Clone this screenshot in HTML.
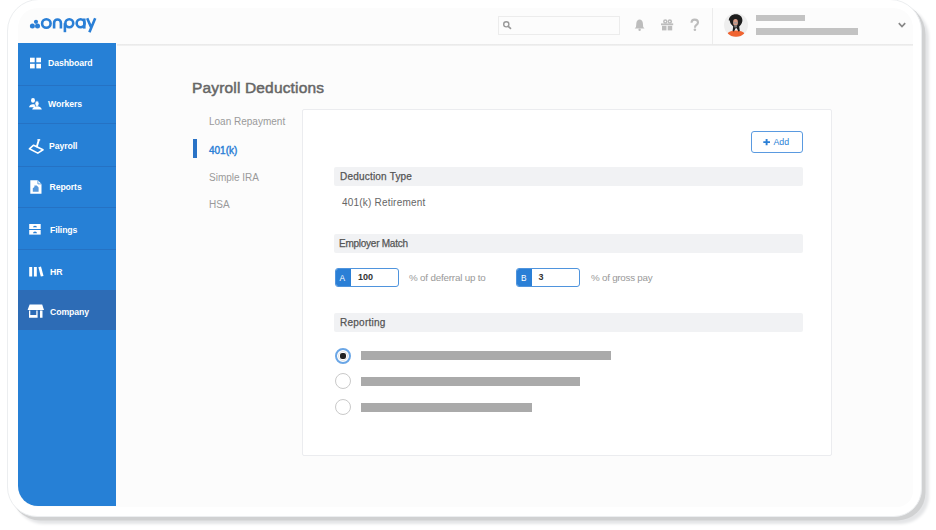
<!DOCTYPE html>
<html><head><meta charset="utf-8">
<style>
*{box-sizing:border-box;margin:0;padding:0}
html,body{width:936px;height:530px;overflow:hidden;background:#fff}
body{position:relative;font-family:"Liberation Sans",sans-serif}
.a{position:absolute}
.frame{left:7px;top:-1px;width:915px;height:517.5px;border-radius:32px 32px 28px 30px;background:#fff;border:1.5px solid #eceef0;box-shadow:3.5px 3.5px 0.5px #d0d1d2,7px 7px 3px #e4e5e7}
.panel{left:18px;top:8px;width:895px;height:498.5px;border-radius:20px 20px 16px 20px;background:#fcfcfc;overflow:hidden}
.hline{left:116.5px;top:43.5px;width:796.5px;height:2.5px;background:linear-gradient(#e8e8e8,#f3f3f3)}
.side{left:18px;top:43.3px;width:98.2px;height:463.2px;background:#2680d6;border-bottom-left-radius:20px}
.div{left:18px;width:98.2px;height:1px;background:#2572c4}
.nav{position:absolute;color:#fff;font-weight:bold;font-size:8.7px;letter-spacing:-0.1px;white-space:nowrap;line-height:1}
.t{position:absolute;white-space:nowrap;line-height:1}
.bar{position:absolute;background:#aaa}
</style></head><body>
<div class="a frame"></div>
<div class="a panel"></div>
<div class="a hline"></div>
<!-- logo -->
<svg class="a" style="left:26px;top:12px" width="76" height="24" viewBox="26 12 76 24">
 <g fill="#2a7fd6">
  <circle cx="36" cy="21.8" r="2.1"/><circle cx="32.4" cy="26.1" r="2.5"/><circle cx="37.5" cy="26.1" r="2.5"/>
 </g>
 <g fill="none" stroke="#2a7fd6" stroke-width="2.6" stroke-linecap="butt">
  <circle cx="46.35" cy="23.5" r="4.25"/>
  <path d="M54.1 28.4V22.9a3.4 3.4 0 0 1 6.8 0V28.4"/>
  <path d="M64.9 32.2V23.2"/><circle cx="69.3" cy="23.25" r="3.95"/>
  <circle cx="80.6" cy="23.25" r="3.95"/><path d="M84.3 18.5V28.6"/>
  <path d="M87.2 18.3L91.2 27.4M95.2 18.3L89.4 32.2"/>
 </g>
</svg>

<!-- sidebar -->
<div class="a side"></div>
<div class="a" style="left:18px;top:290px;width:98.2px;height:40.3px;background:#2d6cb6"></div>
<div class="a div" style="top:85px"></div>
<div class="a div" style="top:123px"></div>
<div class="a div" style="top:166px"></div>
<div class="a div" style="top:207px"></div>
<div class="a div" style="top:249px"></div>

<div class="nav" style="left:48px;top:59px">Dashboard</div>
<div class="nav" style="left:48px;top:100px">Workers</div>
<div class="nav" style="left:49px;top:142px">Payroll</div>
<div class="nav" style="left:49.5px;top:183px">Reports</div>
<div class="nav" style="left:50px;top:226px">Filings</div>
<div class="nav" style="left:50px;top:268px">HR</div>
<div class="nav" style="left:50px;top:308px">Company</div>

<!-- header -->
<div class="a" style="left:498px;top:16px;width:122px;height:19px;border:1px solid #ececec;background:#fcfcfc"></div>
<svg class="a" style="left:500px;top:18px" width="16" height="14" viewBox="500 18 16 14">
 <circle cx="506.3" cy="24.3" r="2.6" fill="none" stroke="#999" stroke-width="1.4"/>
 <path d="M508.2 26.3L510.5 28.4" stroke="#999" stroke-width="1.6" stroke-linecap="round"/>
</svg>
<div class="a" style="left:712px;top:8px;width:1px;height:36px;background:#ececec"></div>
<div class="a" style="left:724px;top:13px;width:24px;height:24px;border-radius:50%;background:#eeeeee"></div>
<div class="bar" style="left:756px;top:15px;width:49px;height:6px;background:#c3c3c3"></div>
<div class="bar" style="left:756px;top:28px;width:102px;height:7px;background:#c3c3c3"></div>
<svg class="a" style="left:896px;top:20px" width="12" height="10" viewBox="896 20 12 10">
 <path d="M898.8 23.2L902 26.6L905.2 23.2" fill="none" stroke="#888" stroke-width="1.7"/>
</svg>

<!-- title -->
<div class="t" style="left:192px;top:80px;font-size:15.5px;letter-spacing:0.16px;color:#666;-webkit-text-stroke:0.5px #666">Payroll Deductions</div>
<div class="t" style="left:209px;top:116.5px;font-size:10px;color:#9a9a9a">Loan Repayment</div>
<div class="a" style="left:193px;top:139px;width:4px;height:19px;background:#2a73c6"></div>
<div class="t" style="left:209px;top:145.5px;font-size:10px;color:#2a7fd6;-webkit-text-stroke:0.4px #2a7fd6">401(k)</div>
<div class="t" style="left:209px;top:172.5px;font-size:10px;color:#9a9a9a">Simple IRA</div>
<div class="t" style="left:209px;top:200px;font-size:10px;color:#9a9a9a">HSA</div>

<!-- card -->
<div class="a" style="left:302px;top:109px;width:530px;height:347px;background:#fff;border:1px solid #ebecef;border-radius:2px"></div>
<div class="a" style="left:751px;top:131px;width:52px;height:22px;border:1px solid #5a9ae0;border-radius:3px;background:#fff"></div>
<div class="t" style="left:773.5px;top:138px;font-size:8.8px;color:#2a7fd6">Add</div>
<div class="a" style="left:333.5px;top:167px;width:469px;height:18.5px;background:#f1f2f4;border-radius:2px"></div>
<div class="t" style="left:340px;top:172px;font-size:10px;letter-spacing:0.2px;color:#555;-webkit-text-stroke:0.25px #555">Deduction Type</div>
<div class="t" style="left:342px;top:198px;font-size:10px;letter-spacing:0.2px;color:#666">401(k) Retirement</div>
<div class="a" style="left:333.5px;top:234.2px;width:469px;height:19px;background:#f1f2f4;border-radius:2px"></div>
<div class="t" style="left:339px;top:239px;font-size:10px;letter-spacing:-0.25px;color:#555;-webkit-text-stroke:0.25px #555">Employer Match</div>
<div class="a" style="left:334.5px;top:268px;width:64px;height:19px;border:1px solid #4f94dd;border-radius:3px;background:#fff;overflow:hidden"><div class="a" style="left:0;top:0;width:15px;height:17px;background:#2a7fd6"></div></div>
<div class="t" style="left:339.5px;top:273.5px;font-size:8.3px;color:#fff">A</div>
<div class="t" style="left:358px;top:273px;font-size:9px;font-weight:bold;color:#333">100</div>
<div class="t" style="left:409px;top:272.5px;font-size:9.8px;letter-spacing:-0.18px;color:#999">% of deferral up to</div>
<div class="a" style="left:516px;top:268px;width:64px;height:19px;border:1px solid #4f94dd;border-radius:3px;background:#fff;overflow:hidden"><div class="a" style="left:0;top:0;width:15px;height:17px;background:#2a7fd6"></div></div>
<div class="t" style="left:521px;top:273.5px;font-size:8.3px;color:#fff">B</div>
<div class="t" style="left:538.5px;top:273px;font-size:9px;font-weight:bold;color:#333">3</div>
<div class="t" style="left:591px;top:272.5px;font-size:9.8px;letter-spacing:-0.24px;color:#999">% of gross pay</div>
<div class="a" style="left:333.5px;top:313px;width:469px;height:19px;background:#f1f2f4;border-radius:2px"></div>
<div class="t" style="left:340px;top:318px;font-size:10px;letter-spacing:0.25px;color:#555;-webkit-text-stroke:0.25px #555">Reporting</div>

<div class="a" style="left:335px;top:348px;width:16px;height:16px;border-radius:50%;border:2.2px solid #6aa6e6;background:#fff"></div>
<div class="a" style="left:337.6px;top:350.6px;width:10.8px;height:10.8px;border-radius:50%;border:1.2px solid #e4e4e4"></div>
<div class="a" style="left:340.4px;top:353.4px;width:5.2px;height:5.2px;border-radius:40%;background:#222"></div>
<div class="bar" style="left:361px;top:351px;width:250px;height:9px"></div>
<div class="a" style="left:335px;top:373px;width:16px;height:16px;border-radius:50%;border:1.3px solid #c9c9c9;background:#fff"></div>
<div class="bar" style="left:361px;top:377px;width:219px;height:9px"></div>
<div class="a" style="left:335px;top:399px;width:16px;height:16px;border-radius:50%;border:1.3px solid #c9c9c9;background:#fff"></div>
<div class="bar" style="left:361px;top:403px;width:171px;height:9px"></div>

<svg class="a" style="left:0;top:0" width="936" height="530" viewBox="0 0 936 530">
 <g fill="#fff">
  <rect x="30" y="57.7" width="4.7" height="4.6"/><rect x="36.3" y="57.7" width="4.7" height="4.6"/>
  <rect x="30" y="63.8" width="4.7" height="4.6"/><rect x="36.3" y="63.8" width="4.7" height="4.6"/>
  <ellipse cx="33" cy="100.4" rx="2" ry="2.4"/>
  <path d="M29 107.2c0.4-2 2-3 4-3s2.4 0.6 2.4 0.6l-0.6 2.4z"/>
  <ellipse cx="37" cy="103.7" rx="2.1" ry="2.9" stroke="#2880d6" stroke-width="0.8"/>
  <path d="M32.2 109.4c0.6-2.2 2.6-3.2 4.8-3.2s4.2 1 4.8 3.2z"/>
  <path d="M30.3 180.3h7.6l3.6 3.6v9.9h-11.2z"/>
  <rect x="29.2" y="224" width="11.5" height="5" />
  <rect x="29.2" y="230" width="11.5" height="4.6" />
  <rect x="29.2" y="267" width="3" height="9.5"/><rect x="33.9" y="267" width="2.9" height="9.5"/>
  <path d="M38.4 267.2l2.6-0.6l2.5 9.4l-2.7 0.6z"/>
  <path d="M29.6 304.4h12.6l1.8 5.5h-16.4z"/>
  <path d="M29 310.5h1.3v7.3h-1.3zM29 315h8.6v2.8h-8.6zM36.3 310.5h1.3v7.3h-1.3zM40 310.5h2.5v7.3h-2.5z"/>
 </g>
 <g fill="none" stroke="#fff" stroke-width="1.5" stroke-linejoin="round">
  <path d="M29.4 148.8L33.6 145.2L43 149.8L37.8 153.1Z" stroke-width="1.6"/>
  <path d="M36.6 147.2L38.8 140" stroke-width="1.9"/><path d="M37.4 139.8h2.8" stroke-width="1.4"/>
 </g>
 <g fill="#2880d6">
  <path d="M32.8 191.8v-3.6l1.6-1.2v-1.6h2.4l1.8 2.2v4.2z" fill="#5598dc"/><path d="M37.9 180.3v3.6h3.6" fill="none" stroke="#2880d6" stroke-width="0.7"/>
  <path d="M33 227.3a2 1.6 0 0 1 4 0z"/>
  <path d="M33 233.2a2 1.6 0 0 1 4 0z"/>
 </g>
 <g fill="#bdbdbd">
  <path d="M639.6 19.5c-1.8 0-3 1.3-3.2 3.3l-0.4 4.2l-1.3 1.5h9.8l-1.3-1.5l-0.4-4.2c-0.2-2-1.4-3.3-3.2-3.3z"/>
  <circle cx="639.6" cy="29.8" r="1.2"/>
  <rect x="661" y="23.4" width="12.2" height="1.8"/>
  <rect x="662" y="25.8" width="4.5" height="4.6"/><rect x="667.7" y="25.8" width="4.5" height="4.6"/>
  <circle cx="694.9" cy="29.8" r="1.3"/>
 </g>
 <g fill="none" stroke="#bdbdbd" stroke-width="1.5">
  <circle cx="665.3" cy="21.4" r="1.5"/><circle cx="669.8" cy="21.4" r="1.5"/>
  <path d="M691.5 22.8c0-2.1 1.4-3.2 3.2-3.2s3.3 1.1 3.3 2.9c0 2.3-3 2.5-3 4.7v0.5" stroke-width="2.1"/>
 </g>
 <path d="M766.6 139v6.2M763.3 142.1h6.7" stroke="#2a7fd6" stroke-width="1.9"/>
 <defs><clipPath id="av"><circle cx="736" cy="24.7" r="12"/></clipPath></defs>
 <g clip-path="url(#av)">
  <ellipse cx="736" cy="34" rx="8.3" ry="3.4" fill="#f06431"/>
  <path d="M728.8 20.5c0-3.8 3-6.3 7-6.3s6.6 2.5 6.6 6.1c0 2.2-0.9 3.8-2 4.9l-1.2 1.2l0.6 4.6l-1.4 0.6l-1.6-3.4h-1.2l-1.6 3.4l-1.4-0.6l0.6-4.6l-1.4-1.4c-1.2-1.2-2-2.8-2-4.5z" fill="#1e1e1e"/>
  <ellipse cx="735.5" cy="22.4" rx="2.4" ry="3.3" fill="#d89a84"/>
  <path d="M733.6 22.2h3.8v1.2h-3.8z" fill="#9a9a9a"/>
  <path d="M734 25.2h3.2l-0.4 2.4h-2.4z" fill="#777"/>
 </g>
</svg>
</body></html>
